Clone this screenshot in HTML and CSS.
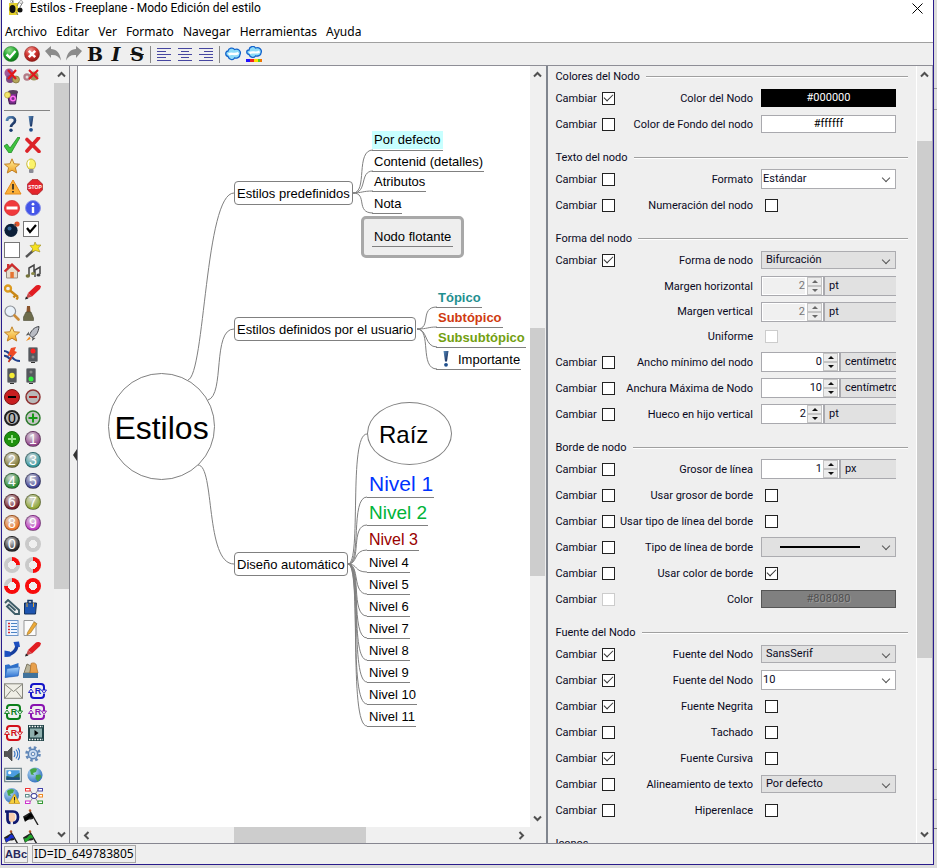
FILE: index.html
```html
<!DOCTYPE html>
<html lang="es">
<head>
<meta charset="utf-8">
<title>Estilos - Freeplane - Modo Edición del estilo</title>
<link rel="stylesheet" href="styles.css">
</head>
<body>
<svg class="defs" aria-hidden="true">
  <defs>
    <radialGradient id="gGreen" cx=".4" cy=".25" r=".8"><stop offset="0" stop-color="#8fe08a"/><stop offset=".55" stop-color="#1fa52b"/><stop offset="1" stop-color="#0a6b14"/></radialGradient>
    <radialGradient id="gRed" cx=".4" cy=".25" r=".8"><stop offset="0" stop-color="#f09a94"/><stop offset=".5" stop-color="#d0332f"/><stop offset="1" stop-color="#8b1512"/></radialGradient>
    <linearGradient id="gStar" x1="0" y1="0" x2="0" y2="1"><stop offset="0" stop-color="#fff2a0"/><stop offset="1" stop-color="#f0a020"/></linearGradient>
    <linearGradient id="gNavy" x1="0" y1="0" x2="1" y2="1"><stop offset="0" stop-color="#5b8fc0"/><stop offset="1" stop-color="#0a1c4a"/></linearGradient>
    <linearGradient id="gFolder" x1="0" y1="0" x2="0" y2="1"><stop offset="0" stop-color="#a8d4fb"/><stop offset="1" stop-color="#2a6fd0"/></linearGradient>
    <radialGradient id="gGlobe" cx=".35" cy=".3" r=".8"><stop offset="0" stop-color="#b7dcf7"/><stop offset="1" stop-color="#2668b8"/></radialGradient>
  </defs>
  <symbol id="bee" viewBox="0 0 17 17"><rect x="1" y="3" width="9" height="12" fill="#e3cf2c"/><ellipse cx="4.500" cy="9" rx="3" ry="4" fill="#111"/><circle cx="12" cy="10" r="2.500" fill="#111"/><path d="M9 6l2-4M12 7l3-5M5 3l-1-3M8 12l2 3" stroke="#777" fill="none"/><circle cx="4" cy="1.500" r="1.500" fill="none" stroke="#aaa"/><circle cx="13" cy="2" r="1.500" fill="none" stroke="#aaa"/></symbol>
  <symbol id="ok" viewBox="0 0 16 16"><circle cx="8" cy="8" r="7.500" fill="url(#gGreen)" stroke="#2b7a30" stroke-width=".6"/><path d="M3.500 8.500l3.300 3L12.500 5" fill="none" stroke="#fff" stroke-width="2.400"/></symbol>
  <symbol id="cancel" viewBox="0 0 16 16"><circle cx="8" cy="8" r="7.500" fill="url(#gRed)" stroke="#8d2622" stroke-width=".6"/><path d="M4.800 4.800l6.400 6.400M11.200 4.800l-6.400 6.400" stroke="#fff" stroke-width="2.600"/></symbol>
  <symbol id="undo" viewBox="0 0 16 16"><path d="M0 5L6 0v3c5 0 9 3.500 10 11.500-2-4-5-6-10-5.500v3z" fill="#8b8b8b"/></symbol>
  <symbol id="redo" viewBox="0 0 16 16"><path d="M16 5l-6-5v3C5 3 1 6.500 0 14.500 2 10.500 5 8.500 10 9v3z" fill="#8b8b8b"/></symbol>
  <symbol id="al" viewBox="0 0 14 14"><path d="M0 1.500h14M0 4.500h9M0 7.500h14M0 10.500h9M0 13.500h14" stroke="#4646a0"/></symbol>
  <symbol id="ac" viewBox="0 0 14 14"><path d="M0 1.500h14M3 4.500h8M0 7.500h14M3 10.500h8M0 13.500h14" stroke="#4646a0"/></symbol>
  <symbol id="ar" viewBox="0 0 14 14"><path d="M0 1.500h14M5 4.500h9M0 7.500h14M5 10.500h9M0 13.500h14" stroke="#4646a0"/></symbol>
  <symbol id="cloud" viewBox="0 0 16 16"><path d="M3 10.500C0 10 0 5 3 5c.5-3 5-4 6.500-1.500C13 2 16.500 5 15 8.500c0 3-3.500 4-5.500 3.500C8 15 4 13.500 3 10.500z" fill="#8fdcf8" stroke="#1263cc" stroke-width="1.300"/><path d="M3.500 8.500c3-2 6 1 10-1.500" fill="none" stroke="#fff" stroke-width="2.400"/></symbol>
  <symbol id="cloudc" viewBox="0 0 16 16"><path d="M3 8.500C0 8 0 4 3 4c.5-4 5-4.500 6.500-2C13 .5 16.500 4 15 7c0 2.500-3.500 3.500-5.500 3C8 12.500 4 11.500 3 8.500z" fill="#8fdcf8" stroke="#1263cc" stroke-width="1.300"/><path d="M3.500 7c3-2 6 1 10-1.500" fill="none" stroke="#fff" stroke-width="2.200"/><path d="M0 13h4v3H0z" fill="#21f"/><path d="M4 13h4v3H4z" fill="#e22"/><path d="M8 13h4v3H8z" fill="#fd0"/><path d="M12 13h2v3h-2z" fill="#5c2"/><path d="M14 13h2v3h-2z" fill="#e70"/></symbol>
  <symbol id="rm1" viewBox="0 0 16 16"><circle cx="5" cy="5" r="4.500" fill="#a15a9a"/><circle cx="6" cy="11" r="4" fill="#7c4a86"/><circle cx="12" cy="11.500" r="3.500" fill="#b5a55a" stroke="#776a30" stroke-width=".7"/><path d="M4 2l8 9M12 2L4 11" stroke="#e3171b" stroke-width="2.200"/></symbol>
  <symbol id="rm2" viewBox="0 0 16 16"><circle cx="4" cy="9" r="3.700" fill="#b27a86"/><circle cx="11" cy="8" r="4.500" fill="#a0925a"/><circle cx="4" cy="9" r="1.500" fill="#ddd"/><path d="M6 2l9 9M15 2l-9 9" stroke="#e3171b" stroke-width="2"/></symbol>
  <symbol id="trash" viewBox="0 0 16 16"><path d="M3 4l10-1-1.500 12h-6z" fill="#7a2c8c" stroke="#40184e"/><ellipse cx="9" cy="3" rx="5" ry="2" fill="#57405e"/><circle cx="9" cy="9.500" r="2.300" fill="none" stroke="#ff6ef0" stroke-width="1.500"/><circle cx="3.500" cy="6" r="3" fill="#f2e56a" stroke="#a9922c" stroke-width=".6"/></symbol>
  <symbol id="q" viewBox="0 0 16 16"><path d="M3 5C3 0 11 0 11 4.500c0 3-4 3-4 6.500" fill="none" stroke="url(#gNavy)" stroke-width="2.700"/><circle cx="7" cy="14.200" r="1.700" fill="#1a3a70"/></symbol>
  <symbol id="ex" viewBox="0 0 16 16"><path d="M3.500 0h5L7 10.500H5z" fill="url(#gNavy)"/><circle cx="6" cy="13.800" r="1.900" fill="#1f4f8c"/></symbol>
  <symbol id="chk" viewBox="0 0 16 16"><path d="M0 9l3-2 3 4L14 0l2 .5L7 16H5z" fill="#3fc43f" stroke="#238a2a" stroke-width=".8"/></symbol>
  <symbol id="no" viewBox="0 0 16 16"><path d="M2 2.500l12 12M13.500 1L2 14" stroke="#dc2328" stroke-width="3.600" stroke-linecap="round"/></symbol>
  <symbol id="star" viewBox="0 0 16 16"><path d="M8 .8l2.100 5 5.400.4-4.100 3.500 1.300 5.300L8 12.200 3.300 15l1.300-5.300L.5 6.200l5.400-.4z" fill="url(#gStar)" stroke="#c08028"/></symbol>
  <symbol id="bulb" viewBox="0 0 16 16"><path d="M4 11C0 7 2 1 6 1s6.500 6 2.500 10z" fill="#fbf36a" stroke="#c5b43c"/><path d="M4.500 2.500c-2 2-1.500 4-.5 6" stroke="#fff" stroke-width="1.500" fill="none"/><rect x="4" y="11" width="4.500" height="4" rx="1" fill="#8b8b96"/></symbol>
  <symbol id="warn" viewBox="0 0 18 16"><path d="M9 1l8 14H1z" fill="#fbb03a" stroke="#e58a16" stroke-linejoin="round"/><path d="M9 5v5.500M9 12v1.600" stroke="#222" stroke-width="1.600"/></symbol>
  <symbol id="stop" viewBox="0 0 16 16"><path d="M5 .7h6L15.300 5v6L11 15.300H5L.7 11V5z" fill="#e5252b" stroke="#b0272a"/></symbol>
  <symbol id="noentry" viewBox="0 0 16 16"><circle cx="8" cy="8" r="7.600" fill="#f0393c" stroke="#d02a2e" stroke-width=".7"/><rect x="2.500" y="6.500" width="11" height="3" fill="#fff"/></symbol>
  <symbol id="info" viewBox="0 0 16 16"><circle cx="8" cy="8" r="7.500" fill="#4455e8" stroke="#8a94e8"/><path d="M8 7v6" stroke="#fff" stroke-width="2.400"/><circle cx="8" cy="4.200" r="1.400" fill="#fff"/></symbol>
  <symbol id="bomb" viewBox="0 0 16 16"><circle cx="7" cy="9.300" r="6.600" fill="#0c1f38"/><circle cx="5.500" cy="7.500" r="2" fill="#3a6a98"/><circle cx="13" cy="3" r="2.600" fill="#e2532a"/><path d="M10 5l2-2" stroke="#555" stroke-width="1.500"/></symbol>
  <symbol id="box1" viewBox="0 0 16 16"><rect x=".5" y=".5" width="15" height="15" fill="#fff" stroke="#777"/><path d="M4 7l3 4 6-7" fill="none" stroke="#000" stroke-width="2.200"/></symbol>
  <symbol id="box0" viewBox="0 0 16 16"><rect x=".5" y=".5" width="15" height="15" fill="#fff" stroke="#777"/></symbol>
  <symbol id="wand" viewBox="0 0 16 16"><path d="M1 15l9-8" stroke="#555" stroke-width="2.400"/><path d="M10 0l1.500 3L16 3l-2.800 3.200L15 10l-4.500-1.500L7 10l.5-3.500L5 3.500l4-.3z" fill="#f5e020" stroke="#9a8a20" stroke-width=".6"/></symbol>
  <symbol id="house" viewBox="0 0 16 16"><path d="M2.500 8L8 3l5.500 5v7h-11z" fill="#e8dccb" stroke="#9b8b80"/><path d="M.5 8.500L8 1.500l7.500 7" fill="none" stroke="#cf2b2b" stroke-width="2.200"/><rect x="3" y="1" width="2.500" height="4" fill="#c33"/><rect x="6.300" y="9" width="3.500" height="6" fill="#e57432"/></symbol>
  <symbol id="notes" viewBox="0 0 16 16"><path d="M4 13V5l5-3v8M10 14V7l5-3v7" fill="none" stroke="#444" stroke-width="1.500"/><ellipse cx="2.800" cy="13" rx="2.200" ry="1.700" fill="#75743a"/><ellipse cx="8" cy="10.500" rx="2" ry="1.500" fill="#8b8a48"/><ellipse cx="13.500" cy="12" rx="2" ry="1.600" fill="#444"/></symbol>
  <symbol id="key" viewBox="0 0 16 16"><circle cx="4" cy="4.500" r="3" fill="none" stroke="#dc9b20" stroke-width="2.300"/><path d="M6 6.500l8 6.500M11.500 11l-2 2.500M14 13l-1.500 2.500" stroke="#c98716" stroke-width="2.300"/></symbol>
  <symbol id="pencil" viewBox="0 0 16 16"><path d="M3 9L11 1.500c1-1 5-.5 5 1L15 5 7 12.500z" fill="#e11d22"/><path d="M3 9l4 3.500-6 2z" fill="#c8484a"/><path d="M0 15.500l1-3 2.500 2z" fill="#222"/></symbol>
  <symbol id="mag" viewBox="0 0 16 16"><circle cx="6.300" cy="6.300" r="5.300" fill="#eaf2fa" stroke="#8c8f96" stroke-width="1.200"/><path d="M10.500 10.500l4 4" stroke="#c98b3a" stroke-width="2.600" stroke-linecap="round"/></symbol>
  <symbol id="brush" viewBox="0 0 16 16"><path d="M4 1h3l.5 6h-4z" fill="#8a542c"/><path d="M3 7h5l2.500 6v2.500h-10V12z" fill="#6d6c4c" stroke="#4c4a34" stroke-width=".6"/></symbol>
  <symbol id="rocket" viewBox="0 0 16 16"><path d="M14 .5C9 1 6 5 4.500 9L7 11.500c4-1.500 6.500-5 7-11z" fill="#b9bcc4" stroke="#41444a"/><path d="M4 5.500L.8 9.500l3-.5zM10.500 12l-3.500 3 .5-3.500z" fill="#555"/><path d="M4.500 10.500L1 15l4.500-2z" fill="#f28c1e"/></symbol>
  <symbol id="pan" viewBox="0 0 16 16"><path d="M0 4c4 0 6 3 8 6s4 4 8 4M0 9c3-1 5 2 7 4" stroke="#22418c" stroke-width="2.200" fill="none"/><path d="M7 1l5-1-1.500 4 2.500 1-7 8 1.500-5-4 1z" fill="#ee4a25"/><path d="M7.500 10l-3 5" stroke="#c5301b" stroke-width="1.600"/></symbol>
  <symbol id="tl" viewBox="0 0 10 16"><rect x=".5" y=".5" width="9" height="14" rx="1" fill="#55585d" stroke="#8b8d90"/><path d="M3 15.500h4" stroke="#333"/></symbol>
  <symbol id="clip" viewBox="0 0 16 16"><path d="M1 4l3-3 11 10v4h-4L3 7.500 5 5.500l6.500 6" fill="none" stroke="#3e5d68" stroke-width="1.900"/></symbol>
  <symbol id="case" viewBox="0 0 16 16"><path d="M5 4V1.500h4V4" fill="none" stroke="#163462" stroke-width="1.500"/><path d="M1.500 4h12L12.500 15h-11z" fill="#1e55b0" stroke="#12305e"/><path d="M4 4v4M10.500 4v4" stroke="#e0a63a"/></symbol>
  <symbol id="list" viewBox="0 0 16 16"><rect x="2" y=".5" width="12" height="15" fill="#eef4ff" stroke="#6b93c8"/><path d="M7 3.500h6M7 6.500h6M7 9.500h6M7 12.500h6" stroke="#4a83c4"/><path d="M4 3.500h2M4 6.500h2M4 9.500h2M4 12.500h2" stroke="#d93030" stroke-width="1.500"/></symbol>
  <symbol id="edit" viewBox="0 0 16 16"><path d="M1 .5h9l3 3v12H1z" fill="#fbfbfb" stroke="#999"/><path d="M4.500 12.500L11 2l3 1.700L7.500 13l-3.500 2z" fill="#eda836" stroke="#9b7326" stroke-width=".6"/></symbol>
  <symbol id="phone" viewBox="0 0 16 16"><path d="M2 13.500c4 1 11-3 11-10" fill="none" stroke="#163f9e" stroke-width="3.400"/><path d="M9.500 1l5.500-.5 1 5.500-5-.5zM.5 9.500l5.500 1 .5 5-6 .5z" fill="#1c4fc0"/></symbol>
  <symbol id="folder" viewBox="0 0 16 16"><path d="M1 3l4-.7 1.500 1.500L14.500 1v12.500L1 15.500z" fill="#2c6fc9"/><path d="M3 6.500l12.500-1.500L14 14l-13 1.500z" fill="url(#gFolder)" stroke="#2a63b8" stroke-width=".6"/></symbol>
  <symbol id="group" viewBox="0 0 16 16"><path d="M1 11l3-9 4 2-1 7z" fill="#b9b49c" stroke="#7b7763"/><path d="M8 1.500c3-1.500 6 0 5.500 3.500L15 11H7z" fill="#e8a04c" stroke="#b26f24" stroke-width=".7"/><rect x="0" y="11" width="15" height="5" fill="#41739c"/></symbol>
  <symbol id="mail" viewBox="0 0 19 16"><rect x=".5" y=".8" width="18" height="14.500" fill="#efeee6" stroke="#85857c"/><path d="M1 1.500l8.500 7 8.500-7M1 15l6-7.500M18 15l-6-7.500" fill="none" stroke="#85857c"/></symbol>
  <symbol id="R" viewBox="0 0 19 16"><path d="M3 5V4q0-3 3-3h7q3 0 3 3v4M16 11v1q0 3-3 3H6q-3 0-3-3V8" fill="none" stroke="currentColor" stroke-width="2"/><path d="M.5 9.500L3 6l2.500 3.500zM13.500 7h5L16 10.500z" fill="#efefef" stroke="currentColor" stroke-width=".9"/></symbol>
  <symbol id="film" viewBox="0 0 16 16"><rect width="16" height="16" fill="#1f4246"/><rect x="2" y="3.500" width="12" height="9" fill="#8fb0ae"/><path d="M1 1.500h14M1 14.500h14" stroke="#fff" stroke-dasharray="1.500 1.200" stroke-width="1.500"/><path d="M6.500 5v6l4-3z" fill="#000"/></symbol>
  <symbol id="speaker" viewBox="0 0 16 16"><path d="M0 5.500h3.500L8 1v14l-4.500-4.500H0z" fill="#555" stroke="#333" stroke-width=".6"/><path d="M10 5q2 3 0 6M12 3.500q3.500 4.500 0 9M14 2q4 6 0 12" fill="none" stroke="#3a76c4" stroke-width="1.200"/></symbol>
  <symbol id="gear" viewBox="0 0 16 16"><circle cx="8" cy="8" r="6.500" fill="none" stroke="#6489b8" stroke-width="2.600" stroke-dasharray="2.600 2.500"/><circle cx="8" cy="8" r="4.700" fill="#c9dcf2" stroke="#5d84b6" stroke-width="1.500"/><circle cx="8" cy="8" r="1.800" fill="#efefef" stroke="#5d84b6"/></symbol>
  <symbol id="pic" viewBox="0 0 19 16"><rect x=".7" y="1" width="17.600" height="14" fill="#e7ecec" stroke="#768890" stroke-width="1.300"/><rect x="2.500" y="3" width="14" height="10" fill="#4b9de0"/><path d="M2.500 9l7 1.500 7-5V13h-14z" fill="#2b6f55"/><path d="M2.500 10.500h14V13h-14z" fill="#1d4d82"/><circle cx="6" cy="5.500" r="1.700" fill="#fff"/></symbol>
  <symbol id="globe" viewBox="0 0 16 16"><circle cx="8" cy="8" r="7.600" fill="url(#gGlobe)"/><path d="M3 3c2-2 6-2 7-1l-1 3-3 1 1 2-3-.5zM9 8l4-.5 1.500 2-3.500 5-2.500-3z" fill="#45a544"/></symbol>
  <symbol id="globew" viewBox="0 0 16 16"><circle cx="7.500" cy="7.500" r="7.400" fill="url(#gGlobe)"/><path d="M3 3c2-2 6-2 7-1l-1 3-3 1 1 2-3-.5z" fill="#45a544"/><path d="M10.500 6l5.300 9.500H5z" fill="#f7cf3c" stroke="#c89516" stroke-width=".7"/><path d="M10.500 9v3.500M10.500 13.500v1" stroke="#222"/></symbol>
  <symbol id="mm" viewBox="0 0 18 16"><path d="M5 2l4 6 4-6M5 14l4-6 4 6M3 8h12" fill="none" stroke="#777" stroke-width=".8"/><ellipse cx="9" cy="8" rx="3" ry="2.500" fill="#fff" stroke="#2e2e96"/><g fill="#fff"><rect x=".5" y=".5" width="4.500" height="2.500" stroke="#e33"/><rect x="13" y=".5" width="4.500" height="2.500" stroke="#44a"/><rect x=".5" y="6.500" width="3.500" height="2.500" stroke="#5a8a88"/><rect x="14" y="6.500" width="3.500" height="2.500" stroke="#e82"/><rect x=".5" y="13" width="4.500" height="2.500" stroke="#c3c"/><rect x="13" y="13" width="4.500" height="2.500" stroke="#393"/></g></symbol>
  <symbol id="hand" viewBox="0 0 16 16"><rect x="4" y="4" width="7" height="9" rx="3" fill="#f9cfae"/><path d="M1 2.500h8q5 0 5 5.500t-5 6M3.500 2.500V10q0 4 3 4" fill="none" stroke="#101a70" stroke-width="2.700"/></symbol>
  <symbol id="flag" viewBox="0 0 16 16"><path d="M7 2l8 14" stroke="#222" stroke-width="1.400"/><circle cx="7" cy="1.500" r="1.200" fill="#b4552c"/><path d="M7.500 3L0 7.500l2 5.500q2-3 5-2.500t4-2z" fill="#222"/><path d="M1 8.500q3 0 4.500-2.500T9 5.500l1.500 3q-3-1-4.500 1T2 12z" fill="currentColor"/></symbol>
  <symbol id="up" viewBox="0 0 9 6"><path d="M1 5l3.500-3.500L8 5" fill="none" stroke="#505050" stroke-width="2"/></symbol>
  <symbol id="dn" viewBox="0 0 9 6"><path d="M1 1l3.500 3.500L8 1" fill="none" stroke="#505050" stroke-width="2"/></symbol>
  <symbol id="lf" viewBox="0 0 6 9"><path d="M5 1L1.500 4.500 5 8" fill="none" stroke="#505050" stroke-width="2"/></symbol>
  <symbol id="rt" viewBox="0 0 6 9"><path d="M1 1l3.500 3.500L1 8" fill="none" stroke="#505050" stroke-width="2"/></symbol>
</svg>

<div class="window">
  <header class="titlebar">
    <svg class="i17"><use href="#bee"/></svg>
    <h1>Estilos - Freeplane - Modo Edición del estilo</h1>
    <button class="close" aria-label="Cerrar"><svg viewBox="0 0 11 11"><path d="M.5.5l10 10M10.500.5l-10 10" stroke="#000" fill="none"/></svg></button>
  </header>
  <nav class="menu">
    <a href="#">Archivo</a><a href="#">Editar</a><a href="#">Ver</a><a href="#">Formato</a><a href="#">Navegar</a><a href="#">Herramientas</a><a href="#">Ayuda</a>
  </nav>
  <div class="toolbar">
    <button aria-label="Aceptar"><svg><use href="#ok"/></svg></button>
    <button aria-label="Cancelar"><svg><use href="#cancel"/></svg></button>
    <button aria-label="Deshacer"><svg><use href="#undo"/></svg></button>
    <button aria-label="Rehacer"><svg><use href="#redo"/></svg></button>
    <button class="glyph">B</button>
    <button class="glyph italic">I</button>
    <button class="glyph strike">S</button>
    <i class="vsep"></i>
    <button aria-label="Izquierda"><svg class="i14"><use href="#al"/></svg></button>
    <button aria-label="Centro"><svg class="i14"><use href="#ac"/></svg></button>
    <button aria-label="Derecha"><svg class="i14"><use href="#ar"/></svg></button>
    <i class="vsep"></i>
    <button aria-label="Nube"><svg><use href="#cloud"/></svg></button>
    <button aria-label="Color de nube"><svg><use href="#cloudc"/></svg></button>
  </div>

  <main>
    <aside class="icons">
      <div class="iconlist">
        <div class="r"><button class="n"><svg><use href="#rm1"/></svg></button><button><svg><use href="#rm2"/></svg></button></div>
        <div class="r"><button><svg><use href="#trash"/></svg></button></div>
        <hr>
        <div class="r"><button><svg><use href="#q"/></svg></button><button><svg><use href="#ex"/></svg></button></div>
        <div class="r"><button><svg><use href="#chk"/></svg></button><button><svg><use href="#no"/></svg></button></div>
        <div class="r"><button><svg><use href="#star"/></svg></button><button><svg><use href="#bulb"/></svg></button></div>
        <div class="r"><button class="m"><svg><use href="#warn"/></svg></button><button><svg viewBox="0 0 16 16"><use href="#stop"/><text class="stoptext" x="8" y="10">STOP</text></svg></button></div>
        <div class="r"><button><svg><use href="#noentry"/></svg></button><button><svg><use href="#info"/></svg></button></div>
        <div class="r"><button class="n"><svg><use href="#bomb"/></svg></button><button><svg><use href="#box1"/></svg></button></div>
        <div class="r"><button><svg><use href="#box0"/></svg></button><button><svg><use href="#wand"/></svg></button></div>
        <div class="r"><button><svg><use href="#house"/></svg></button><button><svg><use href="#notes"/></svg></button></div>
        <div class="r"><button><svg><use href="#key"/></svg></button><button><svg><use href="#pencil"/></svg></button></div>
        <div class="r"><button class="n"><svg><use href="#mag"/></svg></button><button><svg><use href="#brush"/></svg></button></div>
        <div class="r"><button><svg><use href="#star"/></svg></button><button><svg><use href="#rocket"/></svg></button></div>
        <div class="r"><button><svg><use href="#pan"/></svg></button><button><svg viewBox="-3 0 16 16"><use href="#tl" width="10" height="16"/><circle cx="5" cy="4" r="2.500" fill="#f22"/><circle cx="5" cy="10" r="1.500" fill="#888"/></svg></button></div>
        <div class="r"><button class="n"><svg viewBox="-3 0 16 16"><use href="#tl" width="10" height="16"/><circle cx="5" cy="7.500" r="2.700" fill="#f5ec35"/></svg></button><button><svg viewBox="-3 0 16 16"><use href="#tl" width="10" height="16"/><circle cx="5" cy="4" r="1.500" fill="#888"/><circle cx="5" cy="11" r="2.500" fill="#3e4"/></svg></button></div>
        <div class="r"><button><svg viewBox="0 0 16 16"><circle cx="8" cy="8" r="7.500" fill="#c81e20" stroke="#7c1516"/><path d="M4 8h8" stroke="#000" stroke-width="2"/></svg></button><button><svg viewBox="0 0 16 16"><circle cx="8" cy="8" r="7" fill="#b9b9b9" stroke="#8d3232" stroke-width="1.500"/><path d="M4 8h8" stroke="#b01c1c" stroke-width="2"/></svg></button></div>
        <div class="r"><button class="ball b0">0</button><button><svg viewBox="0 0 16 16"><circle cx="8" cy="8" r="7" fill="#c4c4c4" stroke="#2d7a2d" stroke-width="1.500"/><path d="M3.500 8h9M8 3.500v9" stroke="#169a16" stroke-width="2"/></svg></button></div>
        <div class="r"><button><svg viewBox="0 0 16 16"><circle cx="8" cy="8" r="7.500" fill="#1f920f" stroke="#156a0c"/><path d="M4 8h8M8 4v8" stroke="#9be08d" stroke-width="2"/></svg></button><button class="ball b1">1</button></div>
        <div class="r"><button class="ball b2">2</button><button class="ball b3">3</button></div>
        <div class="r"><button class="ball b4">4</button><button class="ball b5">5</button></div>
        <div class="r"><button class="ball b6">6</button><button class="ball b7">7</button></div>
        <div class="r"><button class="ball b8">8</button><button class="ball b9">9</button></div>
        <div class="r"><button class="ball b10">0</button><button class="ring"></button></div>
        <div class="r"><button class="ring p25"></button><button class="ring p50"></button></div>
        <div class="r"><button class="ring p75"></button><button class="ring p100"></button></div>
        <div class="r"><button class="n"><svg><use href="#clip"/></svg></button><button><svg><use href="#case"/></svg></button></div>
        <div class="r"><button class="n"><svg><use href="#list"/></svg></button><button><svg><use href="#edit"/></svg></button></div>
        <div class="r"><button><svg><use href="#phone"/></svg></button><button><svg><use href="#pencil"/></svg></button></div>
        <div class="r"><button class="n"><svg><use href="#folder"/></svg></button><button><svg><use href="#group"/></svg></button></div>
        <div class="r"><button class="w"><svg><use href="#mail"/></svg></button><button class="w blue"><svg viewBox="0 0 19 16"><use href="#R"/><text class="rtext" x="10" y="11">R</text></svg></button></div>
        <div class="r"><button class="w green"><svg viewBox="0 0 19 16"><use href="#R"/><text class="rtext" x="10" y="11">R</text></svg></button><button class="w purple"><svg viewBox="0 0 19 16"><use href="#R"/><text class="rtext" x="10" y="11">R</text></svg></button></div>
        <div class="r"><button class="w red"><svg viewBox="0 0 19 16"><use href="#R"/><text class="rtext" x="10" y="11">R</text></svg></button><button><svg><use href="#film"/></svg></button></div>
        <div class="r"><button><svg><use href="#speaker"/></svg></button><button><svg><use href="#gear"/></svg></button></div>
        <div class="r"><button class="m"><svg><use href="#pic"/></svg></button><button><svg><use href="#globe"/></svg></button></div>
        <div class="r"><button><svg><use href="#globew"/></svg></button><button class="m"><svg><use href="#mm"/></svg></button></div>
        <div class="r"><button class="n"><svg><use href="#hand"/></svg></button><button class="fk"><svg><use href="#flag"/></svg></button></div>
        <div class="r"><button class="n fb"><svg><use href="#flag"/></svg></button><button class="fg"><svg><use href="#flag"/></svg></button></div>
      </div>
      <div class="sb v sb-icons"><svg class="ah"><use href="#up"/></svg><i class="g1"></i><i class="thumb"></i><i class="g2"></i><svg class="ah"><use href="#dn"/></svg></div>
    </aside>
    <div class="splitter"><i></i></div>

    <section class="mapview">
      <div class="map">
        <svg class="edges" fill="none" stroke="#808080">
          <path d="M110 314C127 309 127 127 156 127M130 334C147 329 134 263 156 263M120 399C137 399 127 498 156 498"/>
          <path d="M275 127C290 127 277 84 295 84M275 127C290 127 281 105 295 105M275 127C284 127 284 125 295 125M275 127C290 127 277 147 295 147"/>
          <path d="M339 263C354 263 341 241 359 241M339 263C350 263 349 261 359 261M339 263C350 263 346 281 359 281M339 263C354 263 341 303 359 303"/>
          <path d="M270 498C284 498 270 368 289 368M270 498C284 498 272 431 289 431M270 498C284 498 272 459 289 459M270 498C280 498 275 484 289 484M270 498C280 498 276 506 289 506M270 498C282 498 274 528 289 528M270 498C284 498 272 550 289 550M270 498C284 498 272 572 289 572M270 498C284 498 272 594 289 594M270 498C284 498 272 616 289 616M270 498C284 498 270 638 289 638M270 498C284 498 270 660 289 660"/>
        </svg>
        <span class="node root">Estilos</span>
        <span class="node box predef">Estilos predefinidos</span>
        <span class="node box user">Estilos definidos por el usuario</span>
        <span class="node box auto">Diseño automático</span>
        <span class="node fork f1"><mark>Por defecto</mark></span>
        <span class="node fork f2">Contenid (detalles)</span>
        <span class="node fork f3">Atributos</span>
        <span class="node fork f4">Nota</span>
        <span class="node float"><b>Nodo flotante</b></span>
        <span class="node fork u1">Tópico</span>
        <span class="node fork u2">Subtópico</span>
        <span class="node fork u3">Subsubtópico</span>
        <span class="node fork u4"><svg><use href="#ex"/></svg>Importante</span>
        <span class="node raiz">Raíz</span>
        <span class="node fork n1">Nivel 1</span>
        <span class="node fork n2">Nivel 2</span>
        <span class="node fork n3">Nivel 3</span>
        <span class="node fork n4">Nivel 4</span>
        <span class="node fork n5">Nivel 5</span>
        <span class="node fork n6">Nivel 6</span>
        <span class="node fork n7">Nivel 7</span>
        <span class="node fork n8">Nivel 8</span>
        <span class="node fork n9">Nivel 9</span>
        <span class="node fork n10">Nivel 10</span>
        <span class="node fork n11">Nivel 11</span>
      </div>
      <div class="sb v sb-map"><svg class="ah"><use href="#up"/></svg><i class="g1"></i><i class="thumb"></i><i class="g2"></i><svg class="ah"><use href="#dn"/></svg></div>
      <div class="sb h sb-hmap"><svg class="aw"><use href="#lf"/></svg><i class="g1"></i><i class="thumb"></i><i class="g2"></i><svg class="aw"><use href="#rt"/></svg></div>
    </section>

    <section class="panel">
      <form class="form">
        <h2>Colores del Nodo</h2>
        <div class="row"><label for="c1">Cambiar</label><input type="checkbox" id="c1" checked><label for="v1">Color del Nodo</label><button type="button" class="swatch black" id="v1">#000000</button></div>
        <div class="row"><label for="c2">Cambiar</label><input type="checkbox" id="c2"><label for="v2">Color de Fondo del nodo</label><button type="button" class="swatch white" id="v2">#ffffff</button></div>
        <h2>Texto del nodo</h2>
        <div class="row"><label for="c3">Cambiar</label><input type="checkbox" id="c3"><label for="v3">Formato</label><span class="combo edit"><select id="v3"><option>Estándar</option></select></span></div>
        <div class="row"><label for="c4">Cambiar</label><input type="checkbox" id="c4"><label for="v4">Numeración del nodo</label><input type="checkbox" class="val" id="v4"></div>
        <h2>Forma del nodo</h2>
        <div class="row"><label for="c5">Cambiar</label><input type="checkbox" id="c5" checked><label for="v5">Forma de nodo</label><span class="combo"><select id="v5"><option>Bifurcación</option></select></span></div>
        <div class="row sub"><label for="v6">Margen horizontal</label><span class="spin"><input id="v6" type="text" value="2" disabled><span class="arrows"><button type="button" disabled></button><button type="button" disabled></button></span><span class="unit">pt</span></span></div>
        <div class="row sub tight"><label for="v7">Margen vertical</label><span class="spin"><input id="v7" type="text" value="2" disabled><span class="arrows"><button type="button" disabled></button><button type="button" disabled></button></span><span class="unit">pt</span></span></div>
        <div class="row sub tight"><label for="v8">Uniforme</label><input type="checkbox" class="val" id="v8" disabled></div>
        <div class="row"><label for="c9">Cambiar</label><input type="checkbox" id="c9"><label for="v9">Ancho mínimo del nodo</label><span class="spin wide"><input id="v9" type="text" value="0"><span class="arrows"><button type="button"></button><button type="button"></button></span><span class="unit">centímetro</span></span></div>
        <div class="row"><label for="c10">Cambiar</label><input type="checkbox" id="c10"><label for="v10">Anchura Máxima de Nodo</label><span class="spin wide"><input id="v10" type="text" value="10"><span class="arrows"><button type="button"></button><button type="button"></button></span><span class="unit">centímetro</span></span></div>
        <div class="row"><label for="c11">Cambiar</label><input type="checkbox" id="c11"><label for="v11">Hueco en hijo vertical</label><span class="spin"><input id="v11" type="text" value="2"><span class="arrows"><button type="button"></button><button type="button"></button></span><span class="unit">pt</span></span></div>
        <h2>Borde de nodo</h2>
        <div class="row"><label for="c12">Cambiar</label><input type="checkbox" id="c12"><label for="v12">Grosor de línea</label><span class="spin wide"><input id="v12" type="text" value="1"><span class="arrows"><button type="button"></button><button type="button"></button></span><span class="unit">px</span></span></div>
        <div class="row"><label for="c13">Cambiar</label><input type="checkbox" id="c13"><label for="v13">Usar grosor de borde</label><input type="checkbox" class="val" id="v13"></div>
        <div class="row"><label for="c14">Cambiar</label><input type="checkbox" id="c14"><label for="v14">Usar tipo de línea del borde</label><input type="checkbox" class="val" id="v14"></div>
        <div class="row"><label for="c15">Cambiar</label><input type="checkbox" id="c15"><label for="v15">Tipo de línea de borde</label><span class="combo dash"><select id="v15"><option></option></select></span></div>
        <div class="row"><label for="c16">Cambiar</label><input type="checkbox" id="c16"><label for="v16">Usar color de borde</label><input type="checkbox" class="val" id="v16" checked></div>
        <div class="row"><label for="c17">Cambiar</label><input type="checkbox" id="c17" disabled><label for="v17">Color</label><button type="button" class="swatch gray" id="v17" disabled>#808080</button></div>
        <h2>Fuente del Nodo</h2>
        <div class="row"><label for="c18">Cambiar</label><input type="checkbox" id="c18" checked><label for="v18">Fuente del Nodo</label><span class="combo"><select id="v18"><option>SansSerif</option></select></span></div>
        <div class="row"><label for="c19">Cambiar</label><input type="checkbox" id="c19" checked><label for="v19">Fuente del Nodo</label><span class="combo edit"><select id="v19"><option>10</option></select></span></div>
        <div class="row"><label for="c20">Cambiar</label><input type="checkbox" id="c20" checked><label for="v20">Fuente Negrita</label><input type="checkbox" class="val" id="v20"></div>
        <div class="row"><label for="c21">Cambiar</label><input type="checkbox" id="c21"><label for="v21">Tachado</label><input type="checkbox" class="val" id="v21"></div>
        <div class="row"><label for="c22">Cambiar</label><input type="checkbox" id="c22" checked><label for="v22">Fuente Cursiva</label><input type="checkbox" class="val" id="v22"></div>
        <div class="row"><label for="c23">Cambiar</label><input type="checkbox" id="c23"><label for="v23">Alineamiento de texto</label><span class="combo"><select id="v23"><option>Por defecto</option></select></span></div>
        <div class="row"><label for="c24">Cambiar</label><input type="checkbox" id="c24"><label for="v24">Hiperenlace</label><input type="checkbox" class="val" id="v24"></div>
        <h2 class="plain">Iconos</h2>
      </form>
      <div class="sb v sb-panel"><svg class="ah"><use href="#up"/></svg><i class="g1"></i><i class="thumb"></i><i class="g2"></i><svg class="ah"><use href="#dn"/></svg></div>
    </section>
  </main>

  <footer class="status"><button class="abc">ABc</button><output>ID=ID_649783805</output></footer>
</div>
</body>
</html>
```
FILE: styles.css
```css
* { box-sizing: border-box; }
html {
  height: 100%;
  background:
    linear-gradient(#999, #999) 100% 88px / 3px 1px no-repeat,
    linear-gradient(#999, #999) 100% 109px / 3px 1px no-repeat,
    linear-gradient(#777, #777) 100% 769px / 3px 1px no-repeat,
    linear-gradient(#999, #999) 100% 799px / 3px 1px no-repeat,
    linear-gradient(#777, #777) 100% 828px / 3px 1px no-repeat,
    #dcdcdc;
}
body {
  margin: 0;
  height: 100%;
  overflow: hidden;
  font: 11px/14px Roboto, "Liberation Sans", sans-serif;
  color: #0a0a1e;
  display: flex;
}
button, input, select, output { font: inherit; color: inherit; }
button { border: 0; padding: 0; background: none; }
.defs { position: absolute; width: 0; height: 0; }

.window {
  flex: 1;
  min-width: 0;
  margin: 0 3px 3px 1px;
  border: solid #2a1c8c;
  border-width: 0 1px 1px;
  background: #efefef;
  display: flex;
  flex-direction: column;
}

.titlebar {
  height: 22px;
  background: #fff;
  display: flex;
  align-items: flex-start;
  padding: 0 10px 0 6px;
  color: #000;
}
.i17 { width: 17px; height: 17px; }
.titlebar h1 { margin: 0 auto 0 5px; font: 12px/16px Roboto, sans-serif; }
.close { width: 11px; height: 15px; }
.close svg { display: block; width: 11px; height: 11px; margin-top: 2px; }

.menu {
  height: 21px;
  background: #fff;
  border-bottom: 1px solid #a0a0a0;
  display: flex;
  gap: 9px;
  padding-left: 3px;
}
.menu a { font: 12px/20px "Noto Sans", sans-serif; color: #000; text-decoration: none; }

.toolbar {
  height: 23px;
  border-bottom: 1px solid #8e8e96;
  display: flex;
  align-items: center;
  gap: 5px;
  padding-left: 1px;
}
.toolbar button { width: 16px; height: 16px; display: grid; place-items: center; }
.toolbar svg { width: 16px; height: 16px; }
.toolbar svg.i14 { width: 14px; height: 14px; }
.toolbar .glyph { font: bold 19px/16px "DejaVu Serif", serif; color: #111; }
.toolbar .italic { font-style: italic; }
.toolbar .strike { text-decoration: line-through; }
.vsep { width: 1px; height: 17px; background: #888; }

main {
  flex: 1;
  min-height: 0;
  display: flex;
  border-bottom: 1px solid #868690;
}

.icons { flex: none; width: 68px; display: flex; border-right: 1px solid #86868e; }
.iconlist { flex: 1; overflow: hidden; padding-left: 2px; }
.iconlist hr { border: 0; height: 1px; background: #858585; margin: 2px 0 3px; width: 46px; }
.r { display: flex; gap: 5px; height: 21px; padding-top: 2px; }
.r button { width: 16px; height: 16px; flex: none; }
.r button.n { width: 14px; }
.r button.m { width: 18px; }
.r button.w { width: 19px; }
.r svg { display: block; width: 16px; height: 16px; }
.r .m svg { width: 18px; }
.r .w svg { width: 19px; }
.stoptext { font: bold 5px "Liberation Sans", sans-serif; text-anchor: middle; fill: #fff; }
.rtext { font: bold 9px "Liberation Sans", sans-serif; text-anchor: middle; fill: currentColor; }
.blue { color: #1414c8; }
.green { color: #0c7f1c; }
.purple { color: #8a12b0; }
.red { color: #d2101a; }
.r .fk { color: #000; }
.r .fb { color: #1c2fd0; }
.r .fg { color: #21a52a; }

.r .ball {
  border-radius: 50%;
  border: 1px solid rgba(0, 0, 0, .35);
  color: #fff;
  font: 14px/14px "Liberation Sans", sans-serif;
  background: radial-gradient(circle at 40% 30%, #ddd, var(--c) 70%);
}
.r .b0 { --c: #999; background: #b4b4b4; border: 2px solid #222; color: #000; line-height: 12px; }
.b1 { --c: #96488f; }
.b2 { --c: #88803c; }
.b3 { --c: #3a9aa0; }
.b4 { --c: #2b8c36; }
.b5 { --c: #45489a; }
.b6 { --c: #77202c; }
.b7 { --c: #92a83a; }
.b8 { --c: #ee7a2a; }
.b9 { --c: #c03cc4; }
.b10 { --c: #2a2a2e; }

.r .ring {
  border-radius: 50%;
  background:
    radial-gradient(circle, #efefef 0 4px, transparent 4px),
    conic-gradient(#f80c0c 0 var(--p, 0%), #cacaca var(--p, 0%) 100%);
}
.p25 { --p: 25%; }
.p50 { --p: 50%; }
.p75 { --p: 75%; }
.p100 { --p: 100%; }

.sb { display: flex; background: #f0f0f0; align-items: center; }
.sb.v { width: 15px; flex-direction: column; }
.sb svg { flex: none; padding: 5px 3px; }
.sb .ah { width: 15px; height: 17px; }
.sb .aw { width: 17px; height: 15px; padding: 3px 5px; }
.sb .thumb { background: #cdcdcd; align-self: stretch; }
.sb-icons .g1 { flex: 0; }
.sb-icons .thumb { flex: 506; }
.sb-icons .g2 { flex: 237; }
.sb-map .g1 { flex: 245; }
.sb-map .thumb { flex: 248; }
.sb-map .g2 { flex: 234; }
.sb-hmap .g1 { flex: 139; }
.sb-hmap .thumb { flex: 132; }
.sb-hmap .g2 { flex: 148; }
.sb-panel .g1 { flex: 58; }
.sb-panel .thumb { flex: 517; }
.sb-panel .g2 { flex: 168; }

.splitter { flex: none; width: 7px; display: flex; align-items: center; justify-content: flex-end; }
.splitter i { border: solid transparent; border-width: 6px 4px 6px 0; border-right-color: #333; }

.mapview {
  flex: 469 1 0;
  min-width: 0;
  border-left: 1px solid #86868e;
  border-right: 2px solid #80858e;
  display: grid;
  grid-template: 1fr 16px / 1fr 16px;
}
.sb-hmap { grid-column: 1; }

.map { position: relative; overflow: hidden; background: #fff; color: #000; font: 13px/18px "Liberation Sans", sans-serif; }
.edges { position: absolute; inset: 0; width: 100%; height: 100%; }
.node { position: absolute; white-space: nowrap; }
.root {
  left: 30px; top: 307px; width: 107px; height: 107px;
  border: 1px solid #808080; border-radius: 50%;
  font-size: 32px; line-height: 109px; text-align: center; background: #fff;
}
.raiz {
  left: 289px; top: 336px; width: 85px; height: 63px;
  border: 1px solid #808080; border-radius: 50%;
  font-size: 24px; line-height: 63px; padding-left: 11px; background: #fff;
}
.box { border: 1px solid #808080; border-radius: 4px; padding: 0 2px; height: 24px; line-height: 23px; background: #fff; }
.predef { left: 156px; top: 115px; }
.user { left: 156px; top: 251px; }
.auto { left: 156px; top: 486px; }
.fork { border-bottom: 1px solid #808080; padding: 0 1px 0 2px; }
.fork mark { background: #c8ffff; color: inherit; display: block; margin: 0 -1px 1px -2px; padding: 0 2px; }
.f1 { left: 294px; top: 65px; }
.f2 { left: 294px; top: 87px; }
.f3 { left: 294px; top: 107px; }
.f4 { left: 294px; top: 129px; }
.float { left: 283px; top: 150px; border: 3px solid #a8a8a8; border-radius: 5px; background: #eee; padding: 9px 8px 8px; }
.float b { display: block; font-weight: normal; border-bottom: 1px solid #808080; padding: 0 2px; line-height: 18px; }
.u1, .u2, .u3 { left: 358px; font-weight: bold; }
.u1 { top: 223px; color: #1f9090; }
.u2 { top: 243px; color: #d03a10; }
.u3 { top: 263px; color: #73a010; }
.u4 { left: 358px; top: 285px; display: flex; padding-left: 4px; }
.u4 svg { width: 16px; height: 16px; margin-right: 2px; }
.n1, .n2, .n3, .n4, .n5, .n6, .n7, .n8, .n9, .n10, .n11 { left: 289px; }
.n1 { top: 405px; font-size: 21px; line-height: 26px; color: #0033ff; }
.n2 { top: 435px; font-size: 19px; line-height: 24px; color: #00b439; }
.n3 { top: 464px; font-size: 16px; line-height: 20px; color: #990000; }
.n4 { top: 488px; }
.n5 { top: 510px; }
.n6 { top: 532px; }
.n7 { top: 554px; }
.n8 { top: 576px; }
.n9 { top: 598px; }
.n10 { top: 620px; }
.n11 { top: 642px; }

.panel { flex: 384 1 0; min-width: 0; display: flex; border-right: 1px solid #a8a8b4; }
.form { flex: 1; min-width: 0; overflow: hidden; padding: 0 8px 0 7px; border-right: 1px solid #fff; }
.form h2 {
  margin: 0 0 -1px;
  padding-top: 12px;
  font: inherit;
  line-height: 18px;
  display: flex;
  align-items: center;
  gap: 6px;
}
.form h2:first-child { padding-top: 2px; }
.form h2::after { content: ""; flex: 1; height: 1px; background: #a0a0a0; border-bottom: 1px solid #fff; }
.form h2.plain::after { display: none; }
.row {
  height: 26px;
  display: grid;
  grid-template-columns: 47px 13px 1fr 135px;
  align-items: center;
  padding-right: 12px;
}
.row.tight { height: 25px; }
.row label { white-space: nowrap; padding-top: 1px; }
.row input + label, .row.sub label { justify-self: end; margin-right: 8px; }
.row.sub label { grid-column: 3; }

input[type=checkbox] {
  appearance: none;
  margin: 0;
  width: 13px;
  height: 13px;
  background: #fff;
  border: 1px solid #222;
  display: grid;
  place-items: center;
}
input[type=checkbox]:disabled { border-color: #ccc; }
input[type=checkbox]:checked::before {
  content: "";
  width: 8px;
  height: 4px;
  border: solid #333;
  border-width: 0 0 1px 1px;
  transform: rotate(-45deg);
  margin-top: -3px;
}
input.val { margin-left: 4px; }

.swatch { height: 18px; width: 135px; }
.swatch.black { background: #000; color: #fff; }
.swatch.white { background: #fff; border: 1px solid #a9a9ae; color: #000; }
.swatch.gray { background: #808080; border: 1px solid #555; color: #505050; text-shadow: 1px 1px #999; }

.combo { position: relative; display: block; }
.combo select {
  appearance: none;
  display: block;
  width: 100%;
  height: 18px;
  margin: 0;
  border: 1px solid #acacb0;
  border-radius: 0;
  background: #e1e1e1;
  padding: 0 4px;
}
.combo.edit select { height: 20px; background: #fff; padding: 0 1px; }
.combo.dash select {
  height: 20px;
  background: linear-gradient(#000, #000) 18px 8px / 80px 2px no-repeat #e1e1e1;
}
.combo::after {
  content: "";
  position: absolute;
  right: 7px;
  top: 6px;
  width: 5px;
  height: 5px;
  border: solid #555;
  border-width: 0 1px 1px 0;
  transform: rotate(45deg);
  pointer-events: none;
}

.spin { display: flex; height: 20px; border: 1px solid #a9a9ae; border-right: 0; background: #fff; overflow: hidden; }
.spin input { width: 44px; flex: none; border: 0; padding: 0; text-align: right; background: #fff; }
.spin.wide input { width: 60px; }
.spin input:disabled { background: #f0f0f0; color: #777; border: 1px solid #fff; }
.arrows { flex: none; width: 17px; display: grid; grid-template-rows: 1fr 1fr; padding: 0 1px; background: #fff; }
.arrows button { background: #ececec; border: 1px solid #c4c4c4; display: grid; place-items: center; }
.arrows button::before { content: ""; border: solid transparent; border-width: 0 3px 3px; border-bottom-color: #111; }
.arrows button + button::before { border-width: 3px 3px 0; border-top-color: #111; }
.arrows button:disabled::before { opacity: .6; }
.unit { flex: 1; border-left: 2px solid #a9a9ae; background: #e1e1e1; padding-left: 4px; line-height: 18px; }

.status { height: 20px; flex: none; display: flex; align-items: center; gap: 4px; padding-left: 2px; }
.abc { width: 24px; height: 17px; border: 1px solid #a8a8a8; font: bold 11px/14px "Liberation Sans", sans-serif; color: #28285a; }
.status output { border: 1px solid #a8a8a8; padding: 0 1px; height: 18px; font: 12px/16px "Noto Sans", sans-serif; color: #000; }
```
